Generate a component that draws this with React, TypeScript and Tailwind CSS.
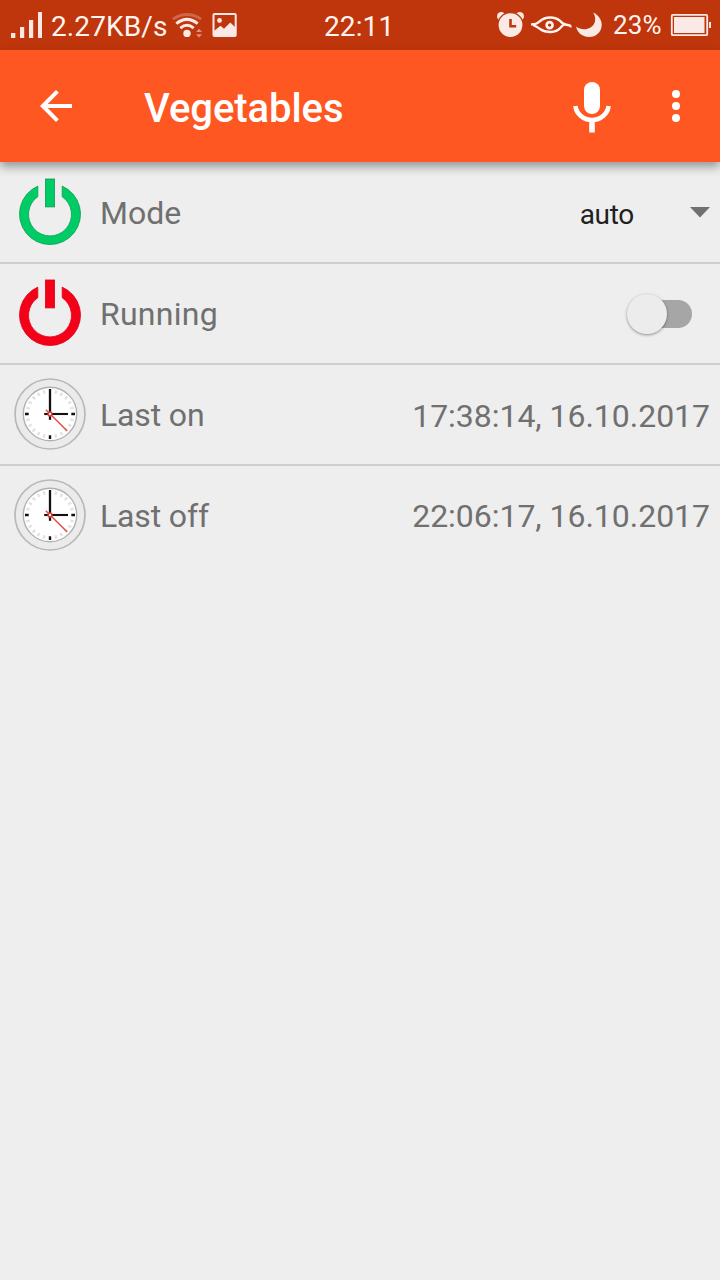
import React from "react";

function Signal() {
  return (
    <svg className="h-[50px] w-[51px] shrink-0" viewBox="0 0 51 50" fill="#fae9e4">
      <rect x="11" y="33" width="4.3" height="5" />
      <rect x="20" y="27" width="4.2" height="11" />
      <rect x="29" y="20" width="4.2" height="18" />
      <rect x="38" y="12" width="4" height="26" />
    </svg>
  );
}

function Wifi() {
  return (
    <svg className="h-[50px] w-[40px] shrink-0" viewBox="170 0 40 50" fill="none">
      <path d="M172.8 19.2Q187 9.8 201.2 19.2" stroke="#d0674a" strokeWidth="2.8" />
      <path d="M176.3 23.6Q187 15.2 197.7 23.6" stroke="#fae9e4" strokeWidth="3" />
      <path d="M180.3 28.2Q187 22.4 193.7 28.2" stroke="#fae9e4" strokeWidth="3" />
      <circle cx="187" cy="33.4" r="3.7" fill="#fae9e4" />
      <path d="M196 32L199 28.8L202 32ZM196 34.3L199 37.5L202 34.3Z" fill="#df937e" />
    </svg>
  );
}

function Picture() {
  return (
    <svg className="h-[50px] w-[30px] shrink-0" viewBox="210 0 30 50">
      <rect x="213.5" y="14" width="22.2" height="22" rx="1" fill="none" stroke="#fae9e4" strokeWidth="2" />
      <circle cx="219.5" cy="20.5" r="2.4" fill="#fae9e4" />
      <path d="M214 31L220.5 25.8L224 28.8L230.3 22.5L235.5 27.5V36H214Z" fill="#fae9e4" />
    </svg>
  );
}

function StatusIcons() {
  return (
    <svg className="h-[50px] w-[117px] shrink-0" viewBox="490 0 117 50">
      <g fill="#fae9e4">
        <circle cx="501.3" cy="16.2" r="4.3" />
        <circle cx="519.7" cy="16.2" r="4.3" />
        <circle cx="510.5" cy="25" r="13.2" fill="#bf360c" />
        <circle cx="510.5" cy="25.1" r="11.9" />
        <path d="M593.1 12.4C599 15 602.1 20.5 601.7 25.5C601.2 32.5 595.6 37.2 588.8 37C582 36.9 577 32.5 576.2 26.6C580 29.8 586 30.3 590.5 27.6C596 24.2 596.5 17.4 593.1 12.4Z" />
      </g>
      <path d="M510.5 19V26.2H516.2" fill="none" stroke="#bf360c" strokeWidth="2.6" />
      <g fill="none" stroke="#fff4ef" strokeWidth="2.4">
        <path d="M531 24.4Q536.5 24.5 539.5 21.5C545.5 16 555 16.3 560.5 21.2Q563 24.5 569 25.2Q570.8 25.6 570.3 27.4" />
        <path d="M533 25Q538 27 540 29C546.5 33.4 556 32.8 560 28.3Q562 25.8 564.5 24.3" />
        <circle cx="549.6" cy="25.1" r="3" strokeWidth="2.6" />
      </g>
    </svg>
  );
}

function Battery() {
  return (
    <svg className="h-[50px] w-[50px] shrink-0" viewBox="670 0 50 50" fill="#fae9e4">
      <rect x="671.8" y="14.8" width="35.4" height="20.4" rx="1" fill="none" stroke="#fae9e4" strokeWidth="1.8" />
      <rect x="674" y="17" width="30.5" height="16" />
      <rect x="709" y="22" width="2" height="6" />
    </svg>
  );
}

function Power({ fill, edge }: { fill: string; edge: string }) {
  return (
    <svg className="-mt-[2px] h-[72px] w-[72px] shrink-0" viewBox="14 176 72 72" fill={fill} stroke={edge} strokeWidth="0.8">
      <path d="M37.8 186.1A30.5 30.5 0 1 0 62.2 186.1V196.7A21.5 21.5 0 1 1 37.8 196.7Z" />
      <rect x="45.4" y="179" width="9.2" height="27.9" />
    </svg>
  );
}

const ticks = Array.from({ length: 24 }, (_, i) => i).filter((i) => i % 6 !== 0);

function Clock() {
  return (
    <svg className="-mt-[2px] h-[72px] w-[72px] shrink-0" viewBox="-36 -36 72 72">
      <circle r="35" fill="#ebebeb" stroke="#b8b8b8" strokeWidth="1.7" />
      <circle r="26.7" fill="#fff" stroke="#b0b0b0" strokeWidth="1.4" />
      <g stroke="#e2e2e2" strokeWidth="2.4">
        {ticks.map((i) => (
          <path key={i} d="M0 -24.5V-21" transform={`rotate(${i * 15})`} />
        ))}
      </g>
      <g stroke="#111">
        <path d="M-25 0H-21.3M21.3 0H25M0 21.3V25" strokeWidth="2.4" />
        <path d="M0 -25V5.8" strokeWidth="2.3" />
        <path d="M-5.8 0H18" strokeWidth="2.1" />
      </g>
      <path d="M-4.2 -4.2L17 16.8" stroke="#e5483e" strokeWidth="1.4" />
      <circle r="1.9" fill="#fff" stroke="#e03c31" strokeWidth="1.5" />
    </svg>
  );
}

function Row({ icon, label, last, children }: { icon: React.ReactNode; label: React.ReactNode; last?: boolean; children: React.ReactNode }) {
  return (
    <li className={`flex h-[101px] items-center border-b-2 pr-[10px] pl-[14px] ${last ? "border-transparent" : "border-[#cecece]"}`}>
      {icon}
      <span className="ml-[14px] text-[32px] leading-[38px]">{label}</span>
      <div className="ml-auto flex items-center">{children}</div>
    </li>
  );
}

export default function App() {
  return (
    <div className="flex h-[1280px] w-[720px] flex-col overflow-hidden bg-[#eeeeee] font-['Roboto',sans-serif] text-[#707070]">
      <div className="grid h-[50px] shrink-0 grid-cols-[324px_1fr_auto] items-center bg-[#bf360c] text-[#fff4ef]">
        <div className="flex items-center">
          <Signal />
          <span className="w-[119px] pt-[3px] text-[28px] leading-[32px] tracking-[0.12px] whitespace-nowrap">2.27KB/s</span>
          <Wifi />
          <Picture />
        </div>
        <span className="pt-[3px] text-[28px] leading-[32px] tracking-[0.1px]">22:11</span>
        <div className="flex items-center">
          <StatusIcons />
          <span className="w-[63px] pl-[6px] text-[26px] leading-[32px] tracking-[0.2px]">23%</span>
          <Battery />
        </div>
      </div>
      <header className="z-10 flex h-[112px] shrink-0 items-center bg-[#ff5722] text-white shadow-[0_5px_9px_rgba(0,0,0,0.36)]">
        <svg className="h-[112px] w-[144px] shrink-0" viewBox="0 50 144 112" fill="white">
          <path d="M72 104V108H47.7L58.8 119.2L56 122L40 106L56 90L58.8 92.8L47.7 104Z" />
        </svg>
        <h1 className="pt-[6px] text-[40px] leading-[48px] font-medium tracking-[-0.06px]">Vegetables</h1>
        <svg className="ml-auto h-[112px] w-[160px] shrink-0" viewBox="560 50 160 112" fill="white">
          <rect x="584" y="82" width="16" height="32" rx="8" />
          <path d="M575.4 106A16.7 15.8 0 0 0 608.6 106" fill="none" stroke="white" strokeWidth="4.6" />
          <rect x="589.2" y="122" width="5.6" height="10.5" />
          <circle cx="676" cy="94" r="4" />
          <circle cx="676" cy="106" r="4" />
          <circle cx="676" cy="118" r="4" />
        </svg>
      </header>
      <ul className="flex flex-col pt-px">
        <Row label="Mode" icon={<Power fill="#00cc66" edge="#0b9d50" />}>
          <button className="flex items-center text-[28px] leading-[34px] text-[#212121]">
            <span className="mt-[4px] mr-[56px] tracking-[-0.3px]">auto</span>
            <svg className="-mt-[2px] h-[12px] w-[20px]" viewBox="0 0 20 12" fill="#707070">
              <path d="M0 1H20L10 11.5Z" />
            </svg>
          </button>
        </Row>
        <Row label={<span className="tracking-[0.25px]">Running</span>} icon={<Power fill="#f40018" edge="#e00018" />}>
          <button role="switch" aria-checked="false" aria-label="Running" className="mr-[18px] flex h-[28px] w-[58px] items-center rounded-full bg-[#a6a6a6]">
            <span className="-ml-[7px] h-[40px] w-[40px] shrink-0 rounded-full bg-[#ececec] shadow-[0_1px_3px_rgba(0,0,0,0.4)]" />
          </button>
        </Row>
        <Row label={<span className="tracking-[-0.15px]">Last on</span>} icon={<Clock />}>
          <span className="pt-[3px] text-[32px] leading-[38px] tracking-[-0.03px]">17:38:14, 16.10.2017</span>
        </Row>
        <Row label={<span className="tracking-[-0.15px]">Last off</span>} icon={<Clock />} last>
          <span className="pt-[1px] text-[32px] leading-[38px] tracking-[-0.03px]">22:06:17, 16.10.2017</span>
        </Row>
      </ul>
    </div>
  );
}
